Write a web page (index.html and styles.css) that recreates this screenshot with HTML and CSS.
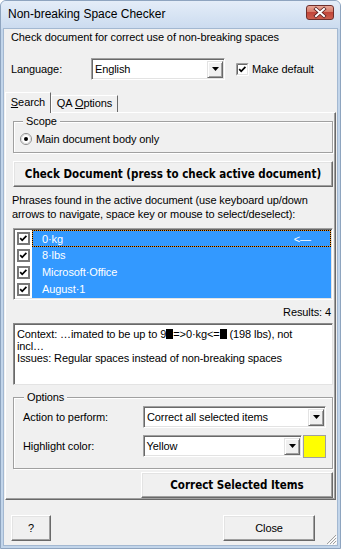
FILE: index.html
```html
<!DOCTYPE html>
<html>
<head>
<meta charset="utf-8">
<title>Non-breaking Space Checker</title>
<link rel="stylesheet" href="styles.css">
</head>
<body>
<div class="window">
  <div class="titlebar">
    <span class="title">Non-breaking Space Checker</span>
    <span class="closebtn">
      <svg width="28" height="15" viewBox="0 0 28 15">
        <path d="M10 4 L18 11 M18 4 L10 11" stroke="#5a2020" stroke-width="3.6" stroke-linecap="square" fill="none"/>
        <path d="M10 4 L18 11 M18 4 L10 11" stroke="#fff" stroke-width="2" stroke-linecap="square" fill="none"/>
      </svg>
    </span>
  </div>
  <div class="client">
    <div class="desc">Check document for correct use of non-breaking spaces</div>
    <div class="lang-row">
      <span class="lang-label">Language:</span>
      <div class="combo lang-combo">
        <span class="combo-text">English</span>
        <span class="drop"><svg width="7" height="4" viewBox="0 0 7 4"><path d="M0 0 H7 L3.5 4 Z" fill="#000"/></svg></span>
      </div>
      <span class="check">
        <svg width="13" height="13" viewBox="0 0 13 13">
          <path d="M0.5 12.5 V0.5 H12.5" stroke="#a0a0a0" fill="none"/>
          <path d="M1.5 11.5 V1.5 H11.5" stroke="#696969" fill="none"/>
          <path d="M0.5 12.5 H12.5 V0.5" stroke="#fff" fill="none"/>
          <path d="M1.5 11.5 H11.5 V1.5" stroke="#e3e3e3" fill="none"/>
          <rect x="2" y="2" width="9" height="9" fill="#fff"/>
          <path d="M3.2 6.2 L5.2 8.3 L9.4 3.8" stroke="#000" stroke-width="1.7" fill="none"/>
        </svg>
      </span>
      <span class="check-label">Make default</span>
    </div>
    <div class="tabstrip">
      <div class="tab sel"><u>S</u>earch</div>
      <div class="tab">QA <u>O</u>ptions</div>
    </div>
    <div class="panel">
      <fieldset class="group scope">
        <legend>Scope</legend>
        <div class="radio-row">
          <span class="radio">
            <svg width="12" height="12" viewBox="0 0 12 12">
              <circle cx="6" cy="6" r="5.5" fill="#fff" stroke="#8a8a8a"/>
              <circle cx="6" cy="6" r="4.5" fill="#fff" stroke="#d8d8d8"/>
              <circle cx="6" cy="6" r="2" fill="#000"/>
            </svg>
          </span>
          <span>Main document body only</span>
        </div>
      </fieldset>
      <div class="btn btn-check">Check Document (press to check active document)</div>
      <div class="phrases">Phrases found in the active document (use keyboard up/down<br>arrows to navigate, space key or mouse to select/deselect):</div>
      <div class="listbox">
        <div class="row">
          <span class="cell-check"><svg width="13" height="13" viewBox="0 0 13 13"><rect width="13" height="13" fill="#787878"/><rect x="2" y="2" width="9" height="9" fill="#fff"/><path d="M3.2 6.2 L5.2 8.3 L9.4 3.8" stroke="#000" stroke-width="1.7" fill="none"/></svg></span>
          <span class="row-body focus"><span>0·kg</span><span>&lt;—</span></span>
        </div>
        <div class="row">
          <span class="cell-check"><svg width="13" height="13" viewBox="0 0 13 13"><rect width="13" height="13" fill="#787878"/><rect x="2" y="2" width="9" height="9" fill="#fff"/><path d="M3.2 6.2 L5.2 8.3 L9.4 3.8" stroke="#000" stroke-width="1.7" fill="none"/></svg></span>
          <span class="row-body"><span>8·lbs</span></span>
        </div>
        <div class="row">
          <span class="cell-check"><svg width="13" height="13" viewBox="0 0 13 13"><rect width="13" height="13" fill="#787878"/><rect x="2" y="2" width="9" height="9" fill="#fff"/><path d="M3.2 6.2 L5.2 8.3 L9.4 3.8" stroke="#000" stroke-width="1.7" fill="none"/></svg></span>
          <span class="row-body"><span>Microsoft·Office</span></span>
        </div>
        <div class="row">
          <span class="cell-check"><svg width="13" height="13" viewBox="0 0 13 13"><rect width="13" height="13" fill="#787878"/><rect x="2" y="2" width="9" height="9" fill="#fff"/><path d="M3.2 6.2 L5.2 8.3 L9.4 3.8" stroke="#000" stroke-width="1.7" fill="none"/></svg></span>
          <span class="row-body"><span>August·1</span></span>
        </div>
      </div>
      <div class="results">Results: 4</div>
      <div class="context">Context: …imated to be up to 9<span class="blk"></span>=&gt;0·kg&lt;=<span class="blk"></span> (198 lbs), not<br>incl…<br>Issues: Regular spaces instead of non-breaking spaces</div>
      <fieldset class="group options">
        <legend>Options</legend>
        <div class="opt-row">
          <span class="opt-label">Action to perform:</span>
          <div class="combo action-combo">
            <span class="combo-text">Correct all selected items</span>
            <span class="drop"><svg width="7" height="4" viewBox="0 0 7 4"><path d="M0 0 H7 L3.5 4 Z" fill="#000"/></svg></span>
          </div>
        </div>
        <div class="opt-row second">
          <span class="opt-label">Highlight color:</span>
          <div class="combo color-combo">
            <span class="combo-text">Yellow</span>
            <span class="drop"><svg width="7" height="4" viewBox="0 0 7 4"><path d="M0 0 H7 L3.5 4 Z" fill="#000"/></svg></span>
          </div>
          <span class="swatch"></span>
        </div>
      </fieldset>
      <div class="btn btn-correct">Correct Selected Items</div>
    </div>
    <div class="bottom-row">
      <div class="btn btn-help">?</div>
      <div class="btn btn-close">Close</div>
      <span class="grip">
        <svg width="12" height="12" viewBox="0 0 12 12">
          <path d="M11 2 L2 11 M11 5 L5 11 M11 8 L8 11" stroke="#a0a0a0" stroke-width="1" fill="none"/>
          <path d="M12 3 L3 12 M12 6 L6 12 M12 9 L9 12" stroke="#fff" stroke-width="1" fill="none"/>
        </svg>
      </span>
    </div>
  </div>
</div>
</body>
</html>
```

FILE: styles.css
```css
* { box-sizing: border-box; }
html, body { margin: 0; padding: 0; }
body {
  font-family: "Liberation Sans", Arial, sans-serif;
  font-size: 11px;
  letter-spacing: -0.1px;
  color: #000;
  background: #fff;
}
.window {
  width: 341px;
  height: 549px;
  border: 1px solid #8ea4bf;
  border-radius: 6px 6px 0 0;
  background: #c2d5ea;
  display: flex;
  flex-direction: column;
  overflow: hidden;
}
.titlebar {
  height: 28px;
  flex: none;
  display: flex;
  justify-content: space-between;
  align-items: flex-start;
  padding: 0 6px 0 7px;
  background: linear-gradient(#e4edf8, #cbdbef);
}
.title {
  font-size: 12px;
  letter-spacing: 0;
  line-height: 27px;
  color: #000;
}
.closebtn {
  margin-top: 4px;
  width: 28px;
  height: 15px;
  border: 1px solid #6e2f2c;
  border-radius: 3px;
  background: linear-gradient(#e8a696 0%, #d77b69 45%, #c2463a 50%, #cc5f4e 100%);
  display: flex;
  align-items: center;
  justify-content: center;
}
.closebtn svg { display: block; margin: -1px; }
.client {
  flex: 1;
  margin: 0 3px 3px 3px;
  background: #f0f0f0;
  box-shadow: 0 0 0 1px #a3b8d1;
  display: flex;
  flex-direction: column;
}
.desc {
  margin: 1px 0 0 7px;
  line-height: 14px;
  height: 14px;
}
.lang-row {
  display: flex;
  align-items: center;
  margin-top: 14px;
  height: 22px;
}
.lang-label { width: 80px; margin-left: 7px; }
.combo {
  height: 22px;
  background: #fff;
  border: 1px solid;
  border-color: #a0a0a0 #fff #fff #a0a0a0;
  box-shadow: inset 1px 1px #696969, inset -1px -1px #e3e3e3;
  display: flex;
  align-items: center;
}
.combo-text { flex: 1; padding-left: 3px; white-space: nowrap; }
.drop {
  width: 16px;
  height: 17px;
  margin-right: 1px;
  background: #f0f0f0;
  border: 1px solid;
  border-color: #e3e3e3 #696969 #696969 #e3e3e3;
  box-shadow: inset 1px 1px #fff, inset -1px -1px #a0a0a0;
  display: flex;
  align-items: center;
  justify-content: center;
}
.drop svg { display: block; }
.lang-combo { width: 134px; }
.check { width: 13px; height: 13px; margin-left: 11px; }
.check svg { display: block; }
.check-label { margin-left: 3px; }
.tabstrip {
  display: flex;
  align-items: flex-end;
  margin: 12px 0 0 1px;
  height: 20px;
}
.tab {
  width: 67px;
  height: 17px;
  line-height: 15px;
  text-align: center;
  border: 1px solid;
  border-color: #fff #696969 transparent #fff;
  border-bottom: none;
  background: #f0f0f0;
}
.tab.sel {
  width: 46px;
  height: 21px;
  line-height: 19px;
  margin-bottom: -1px;
  z-index: 1;
}
.panel {
  margin-left: 1px;
  width: 331px;
  border: 1px solid;
  border-color: #fff #696969 #696969 #fff;
  box-shadow: inset -1px -1px #a0a0a0;
  padding-bottom: 1px;
  display: flex;
  flex-direction: column;
}
fieldset.group {
  margin: 0 0 0 7px;
  width: 320px;
  min-width: 0;
  border: 1px solid #a0a0a0;
  box-shadow: inset 1px 1px #fff, 1px 1px #fff;
}
fieldset.group legend {
  line-height: 14px;
  padding: 0 3px;
  background: #f0f0f0;
}
.scope {
  margin-top: 1px !important;
  padding: 0 6px 6px 6px;
}
.scope legend { margin-left: 3px; }
.radio-row {
  display: flex;
  align-items: center;
  height: 14px;
  margin-top: 4px;
}
.radio { width: 12px; height: 12px; margin-right: 4px; }
.radio svg { display: block; }
.btn {
  display: flex;
  align-items: center;
  justify-content: center;
  height: 26px;
  background: #f0f0f0;
  border: 1px solid;
  border-color: #fff #696969 #696969 #fff;
  box-shadow: inset -1px -1px #a0a0a0, inset 1px 1px #e3e3e3;
}
.btn-check, .btn-correct {
  font-family: "DejaVu Sans Condensed", "DejaVu Sans", "Liberation Sans", sans-serif;
  font-weight: bold;
  font-size: 11.5px;
  letter-spacing: 0;
}
.btn-check {
  margin: 8px 0 0 7px;
  width: 320px;
}
.phrases {
  margin: 6px 0 0 6px;
  line-height: 14px;
}
.listbox {
  margin: 7px 0 0 7px;
  width: 320px;
  height: 72px;
  border: 1px solid;
  border-color: #a0a0a0 #fff #fff #a0a0a0;
  box-shadow: inset 1px 1px #696969, inset -1px -1px #e3e3e3;
  padding: 1px;
  background: #fff;
  display: flex;
  flex-direction: column;
}
.row {
  display: flex;
  height: 17px;
}
.cell-check {
  width: 17px;
  display: flex;
  align-items: center;
  justify-content: center;
  background: #fff;
}
.cell-check svg { display: block; }
.row-body {
  flex: 1;
  background: #3399ff;
  color: #fff;
  display: flex;
  align-items: center;
  justify-content: space-between;
  padding: 0 20px 1px 10px;
}
.row-body.focus {
  border: 1px dotted #000;
  padding: 0 19px 0 9px;
  background: linear-gradient(#3399ff, #3399ff) padding-box, linear-gradient(#f09020, #f09020) border-box;
}
.results {
  margin-top: 5px;
  line-height: 14px;
  text-align: right;
  padding-right: 4px;
}
.context {
  margin: 4px 0 0 7px;
  width: 320px;
  height: 62px;
  background: #fff;
  border: 1px solid;
  border-color: #8a8a8a #e3e3e3 #e3e3e3 #8a8a8a;
  box-shadow: inset 1px 1px #696969;
  padding: 4px 3px 0 3px;
  line-height: 12px;
}
.blk {
  display: inline-block;
  width: 7px;
  height: 10px;
  background: #000;
  vertical-align: -1px;
}
.options {
  margin-top: 5px !important;
  padding: 0 6px 11px 9px;
}
.options legend { margin-left: 1px; }
.opt-row {
  display: flex;
  align-items: flex-start;
  margin-top: 2px;
  height: 22px;
}
.opt-row.second { margin-top: 7px; }
.opt-label { width: 120px; line-height: 22px; }
.action-combo { width: 183px; }
.color-combo { width: 160px; }
.swatch {
  width: 23px;
  height: 23px;
  margin-left: 1px;
  background: #ffff00;
  border: 1px solid #a0a0a0;
}
.btn-correct {
  margin: 3px 0 0 135px;
  width: 192px;
}
.bottom-row {
  display: flex;
  align-items: flex-start;
  margin-top: 15px;
  height: 30px;
}
.btn-help { margin-left: 7px; width: 40px; }
.btn-close { margin-left: 172px; width: 92px; }
.grip {
  align-self: flex-end;
  margin-left: auto;
  width: 12px;
  height: 12px;
}
.grip svg { display: block; }
```
